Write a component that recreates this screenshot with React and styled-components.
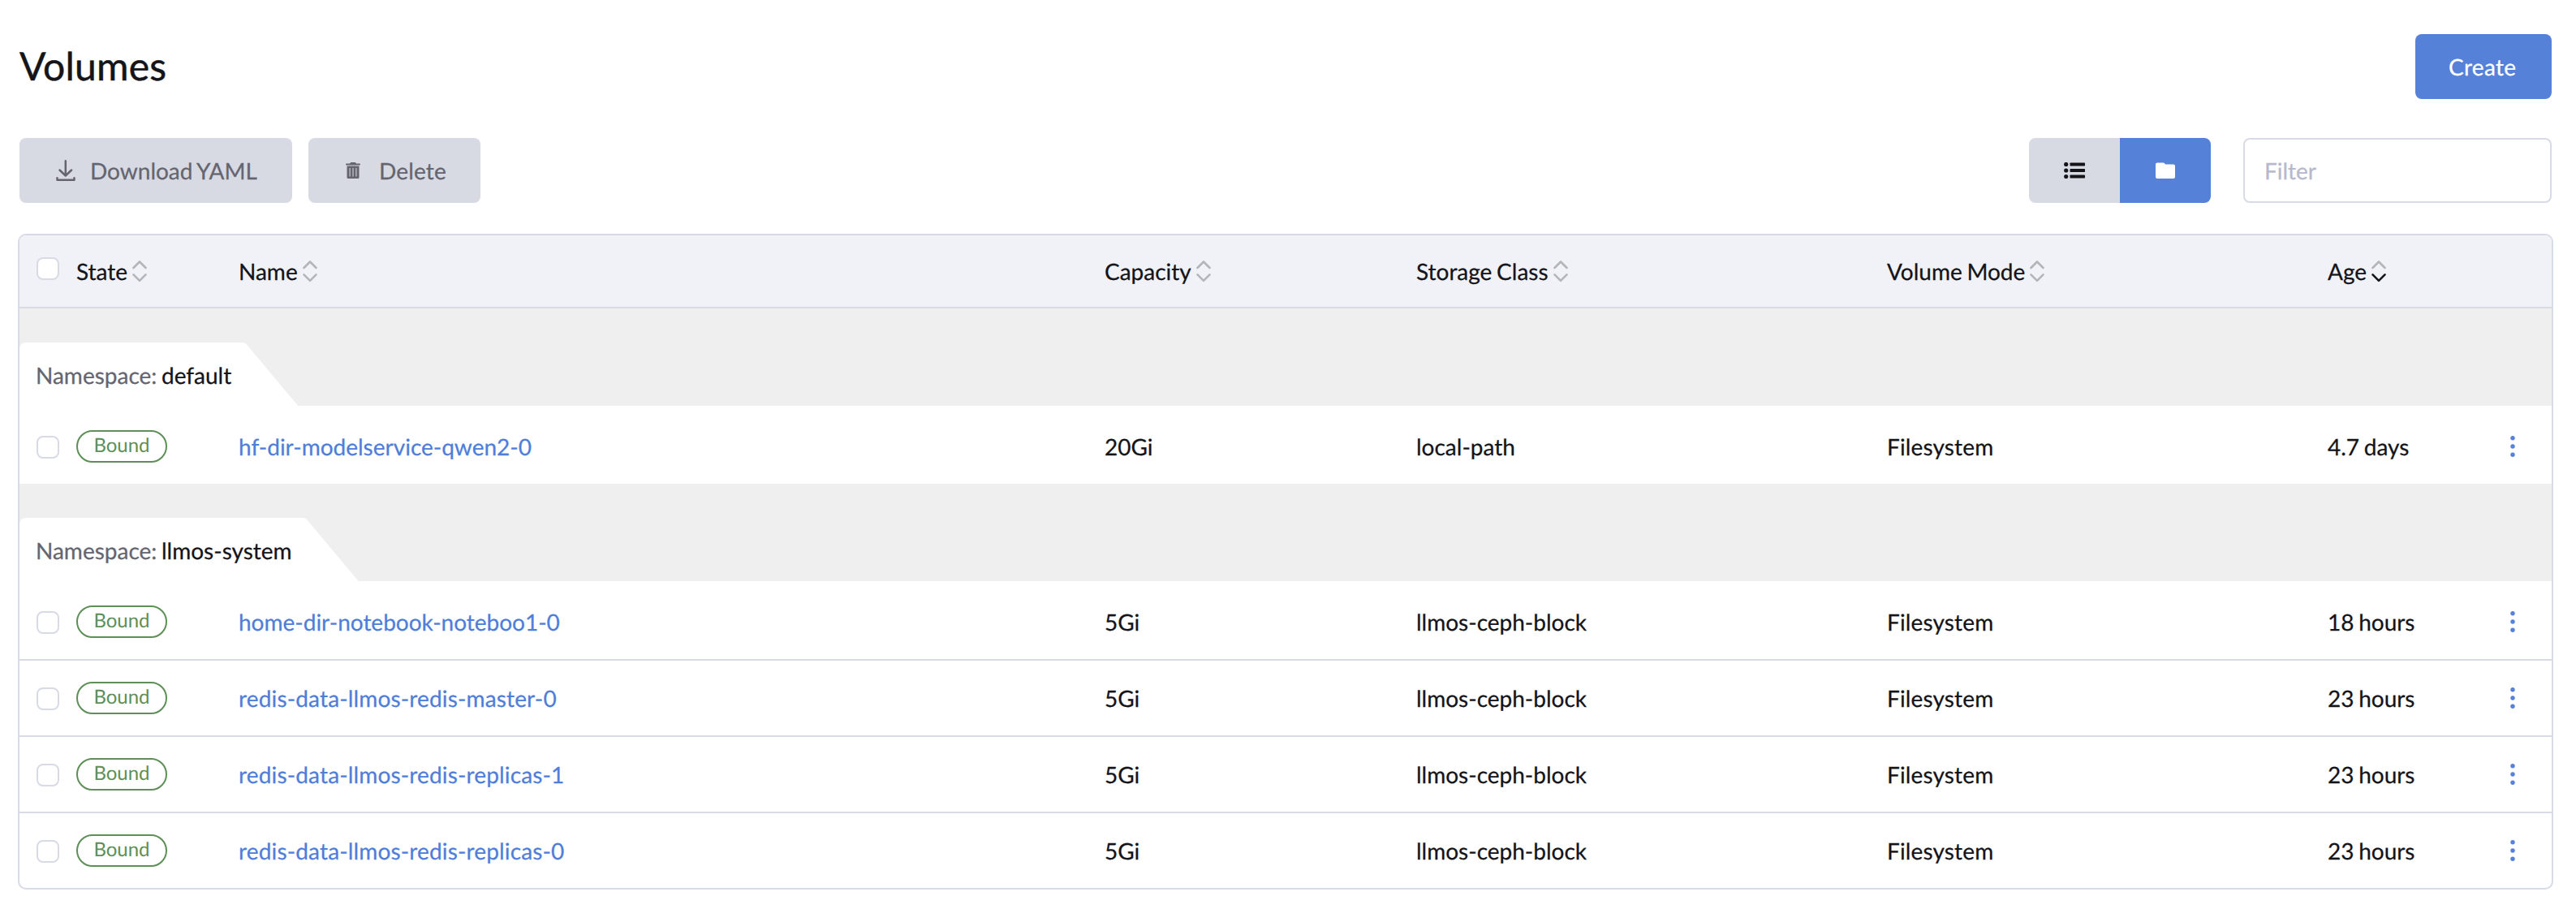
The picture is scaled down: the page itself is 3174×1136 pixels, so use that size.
import React from "react";
import styled, { createGlobalStyle } from "styled-components";

const GlobalStyle = createGlobalStyle`
  * { box-sizing: border-box; }
  body { margin: 0; background: #fff; color: #141419; font-family: Lato, "Liberation Sans", sans-serif; font-size: 28px; line-height: 34px; word-spacing: -1.5px; text-rendering: geometricPrecision; -webkit-text-stroke: 0.25px currentColor; }
  button, input { font: inherit; text-rendering: inherit; word-spacing: inherit; }
`;

const Page = styled.main`
  padding: 42px 28px 40px 22px;
  display: flex;
  flex-direction: column;
`;
const TitleBar = styled.header`
  display: flex;
  justify-content: space-between;
  align-items: center;
  height: 80px;
  padding: 0 2px;
`;
const Title = styled.h1`
  margin: 0;
  font-size: 48px;
  line-height: 58px;
  font-weight: 400;
  letter-spacing: 0.2px;
  -webkit-text-stroke-width: 0.5px;
`;
const Button = styled.button`
  display: flex;
  align-items: center;
  height: 80px;
  width: ${(p) => p.$width}px;
  padding: 0 0 0 ${(p) => p.$pad}px;
  gap: ${(p) => p.$gap || 0}px;
  border: 0;
  border-radius: 8px;
  background: ${(p) => (p.$primary ? "#5681d9" : "#d7dae3")};
  color: ${(p) => (p.$primary ? "#fff" : "#65656f")};
  letter-spacing: ${(p) => p.$tracking || 0}px;
  white-space: nowrap;
`;
const Toolbar = styled.div`
  display: flex;
  margin-top: 48px;
  padding: 0 2px;
  justify-content: space-between;
`;
const Group = styled.div`
  display: flex;
  gap: ${(p) => p.$gap}px;
`;
const Toggle = styled.div`
  display: flex;
  border-radius: 8px;
  overflow: hidden;
`;
const ToggleButton = styled.button`
  display: flex;
  align-items: center;
  justify-content: center;
  width: 112px;
  height: 80px;
  padding: 0;
  border: 0;
  background: ${(p) => (p.$active ? "#5681d9" : "#d7dae3")};
  color: ${(p) => (p.$active ? "#fff" : "#141419")};
`;
const FilterInput = styled.input`
  width: 380px;
  height: 80px;
  padding: 0 24px;
  border: 2px solid #d8dae5;
  border-radius: 8px;
  background: #fff;
  outline: 0;
  &::placeholder { color: #b6b9cb; opacity: 1; }
`;

const Table = styled.section`
  margin-top: 38px;
  border: 2px solid #d8dae5;
  border-radius: 10px;
  overflow: hidden;
`;
const columns = "70px 200px 1067px 384px 580px 543px 163px 1fr";
const HeadRow = styled.div`
  display: grid;
  grid-template-columns: ${columns};
  height: 90px;
  padding-top: 27px;
  background: #f1f2f8;
  border-bottom: 2px solid #d8dae5;
`;
const Row = styled.div`
  display: grid;
  grid-template-columns: ${columns};
  box-sizing: content-box;
  height: 66px;
  padding-top: ${(p) => (p.$first ? 30 : 26)}px;
  border-top: ${(p) => (p.$first ? 0 : 2)}px solid #d8dae5;
`;
const HeadCell = styled.div`
  display: flex;
  gap: 6px;
  svg { margin-top: 3px; }
`;
const Cell = styled.div`
  padding-top: 3px;
  letter-spacing: ${(p) => p.$tracking || 0}px;
`;
const CheckCell = styled.div`
  padding: ${(p) => p.$top}px 0 0 21px;
`;
const Checkbox = styled.div`
  width: 28px;
  height: 28px;
  border: 2px solid #d8dae5;
  border-radius: 8px;
  background: #fff;
`;
const Badge = styled.div`
  width: 112px;
  height: 40px;
  border: 2px solid #5d8f57;
  border-radius: 20px;
  color: #5d8f57;
  font-size: 24px;
  line-height: 34px;
  text-align: center;
  -webkit-text-stroke-width: 0;
`;
const NameLink = styled.a`
  color: #4f7ed9;
`;
const Actions = styled.div`
  padding: 7px 0 0 60px;
  color: #5681d9;
  svg { display: block; }
`;
const GroupBand = styled.div`
  display: flex;
  height: 120px;
  padding-top: 42px;
  background: #efefef;
`;
const GroupTab = styled.div`
  height: 78px;
  padding: 23px 82px 0 20px;
  background: #fff;
  color: #65656f;
  border-top-left-radius: 8px;
  clip-path: polygon(0 0, calc(100% - 68px) 0, calc(100% - 65px) 1px, calc(100% - 62px) 4px, 100% 100%, 0 100%);
  b { font-weight: 400; color: #141419; }
`;

const SortIcon = ({ active }) => (
  <svg width="18" height="28" viewBox="0 0 18 28" fill="none" strokeWidth="2.6" strokeLinecap="round" strokeLinejoin="round">
    <path d="M1.5 10 9 2.5l7.5 7.5" stroke="#b4b4b9" />
    <path d="M1.5 18.300 9 25.800l7.5-7.5" stroke={active ? "#141419" : "#b4b4b9"} />
  </svg>
);
const DownloadIcon = () => (
  <svg width="24" height="28" viewBox="0 0 24 28" fill="none" stroke="currentColor" strokeWidth="2.5" strokeLinecap="round" strokeLinejoin="round">
    <path d="M11.800 2.300v18M4.500 13.500l7.300 7 7.300-7M1.500 23.200v2.600h21v-2.600" />
  </svg>
);
const TrashIcon = () => (
  <svg width="18" height="20" viewBox="0 0 18 20" fill="currentColor">
    <path d="M5 1.500 6.200 0h5.600L13 1.500h4q1 0 1 1T17 3.500H1q-1 0-1-1t1-1z" />
    <path fillRule="evenodd" d="M1.500 4.500h15V18.500q0 1.500-1.500 1.500H3q-1.500 0-1.500-1.500zM4.600 7v10.500h1V7zm3.900 0v10.500h1V7zm3.900 0v10.500h1V7z" />
  </svg>
);
const ListIcon = () => (
  <svg width="26" height="20" viewBox="0 0 26 20" fill="currentColor">
    {[2.5, 10, 17.5].map((y) => (
      <g key={y}>
        <circle cx="2.700" cy={y} r="2.600" />
        <rect x="7.500" y={y - 1.9} width="18.500" height="3.800" rx=".6" />
      </g>
    ))}
  </svg>
);
const FolderIcon = () => (
  <svg width="24" height="20" viewBox="0 0 24 20" fill="currentColor">
    <path d="M2 .5h7.500q.8 0 1.300.6L12 2.500h10q2 0 2 2v13.500q0 2-2 2H2q-2 0-2-2v-15.500q0-2 2-2z" />
  </svg>
);
const DotsIcon = () => (
  <svg width="10" height="28" viewBox="0 0 10 28" fill="currentColor">
    <circle cx="5" cy="2.700" r="2.700" />
    <circle cx="5" cy="13" r="2.700" />
    <circle cx="5" cy="23.300" r="2.700" />
  </svg>
);

const headings = ["State", "Name", "Capacity", "Storage Class", "Volume Mode", "Age"];
const groups = [
  { namespace: "default", rows: [["hf-dir-modelservice-qwen2-0", "20Gi", "local-path", "4.7 days"]] },
  {
    namespace: "llmos-system",
    rows: [
      ["home-dir-notebook-noteboo1-0", "5Gi", "llmos-ceph-block", "18 hours"],
      ["redis-data-llmos-redis-master-0", "5Gi", "llmos-ceph-block", "23 hours"],
      ["redis-data-llmos-redis-replicas-1", "5Gi", "llmos-ceph-block", "23 hours"],
      ["redis-data-llmos-redis-replicas-0", "5Gi", "llmos-ceph-block", "23 hours"],
    ],
  },
];

export default function App() {
  return (
    <Page>
      <GlobalStyle />
      <TitleBar>
        <Title>Volumes</Title>
        <Button $primary $width={168} $pad={41} $tracking={0.3}>Create</Button>
      </TitleBar>
      <Toolbar>
        <Group $gap={20}>
          <Button $width={336} $pad={45} $gap={18}><DownloadIcon />Download YAML</Button>
          <Button $width={212} $pad={46} $gap={23} $tracking={0.15}><TrashIcon />Delete</Button>
        </Group>
        <Group $gap={40}>
          <Toggle>
            <ToggleButton><ListIcon /></ToggleButton>
            <ToggleButton $active><FolderIcon /></ToggleButton>
          </Toggle>
          <FilterInput placeholder="Filter" />
        </Group>
      </Toolbar>
      <Table>
        <HeadRow>
          <CheckCell $top={0}><Checkbox /></CheckCell>
          {headings.map((h) => (
            <HeadCell key={h}>{h}<SortIcon active={h === "Age"} /></HeadCell>
          ))}
        </HeadRow>
        {groups.map((g) => (
          <React.Fragment key={g.namespace}>
            <GroupBand>
              <GroupTab>Namespace: <b>{g.namespace}</b></GroupTab>
            </GroupBand>
            {g.rows.map(([name, capacity, storage, age], i) => (
              <Row key={name} $first={i === 0}>
                <CheckCell $top={7}><Checkbox /></CheckCell>
                <div><Badge>Bound</Badge></div>
                <Cell $tracking={name.startsWith("redis") ? 0.15 : 0}><NameLink>{name}</NameLink></Cell>
                <Cell>{capacity}</Cell>
                <Cell>{storage}</Cell>
                <Cell $tracking={0.15}>Filesystem</Cell>
                <Cell>{age}</Cell>
                <Actions><DotsIcon /></Actions>
              </Row>
            ))}
          </React.Fragment>
        ))}
      </Table>
    </Page>
  );
}
